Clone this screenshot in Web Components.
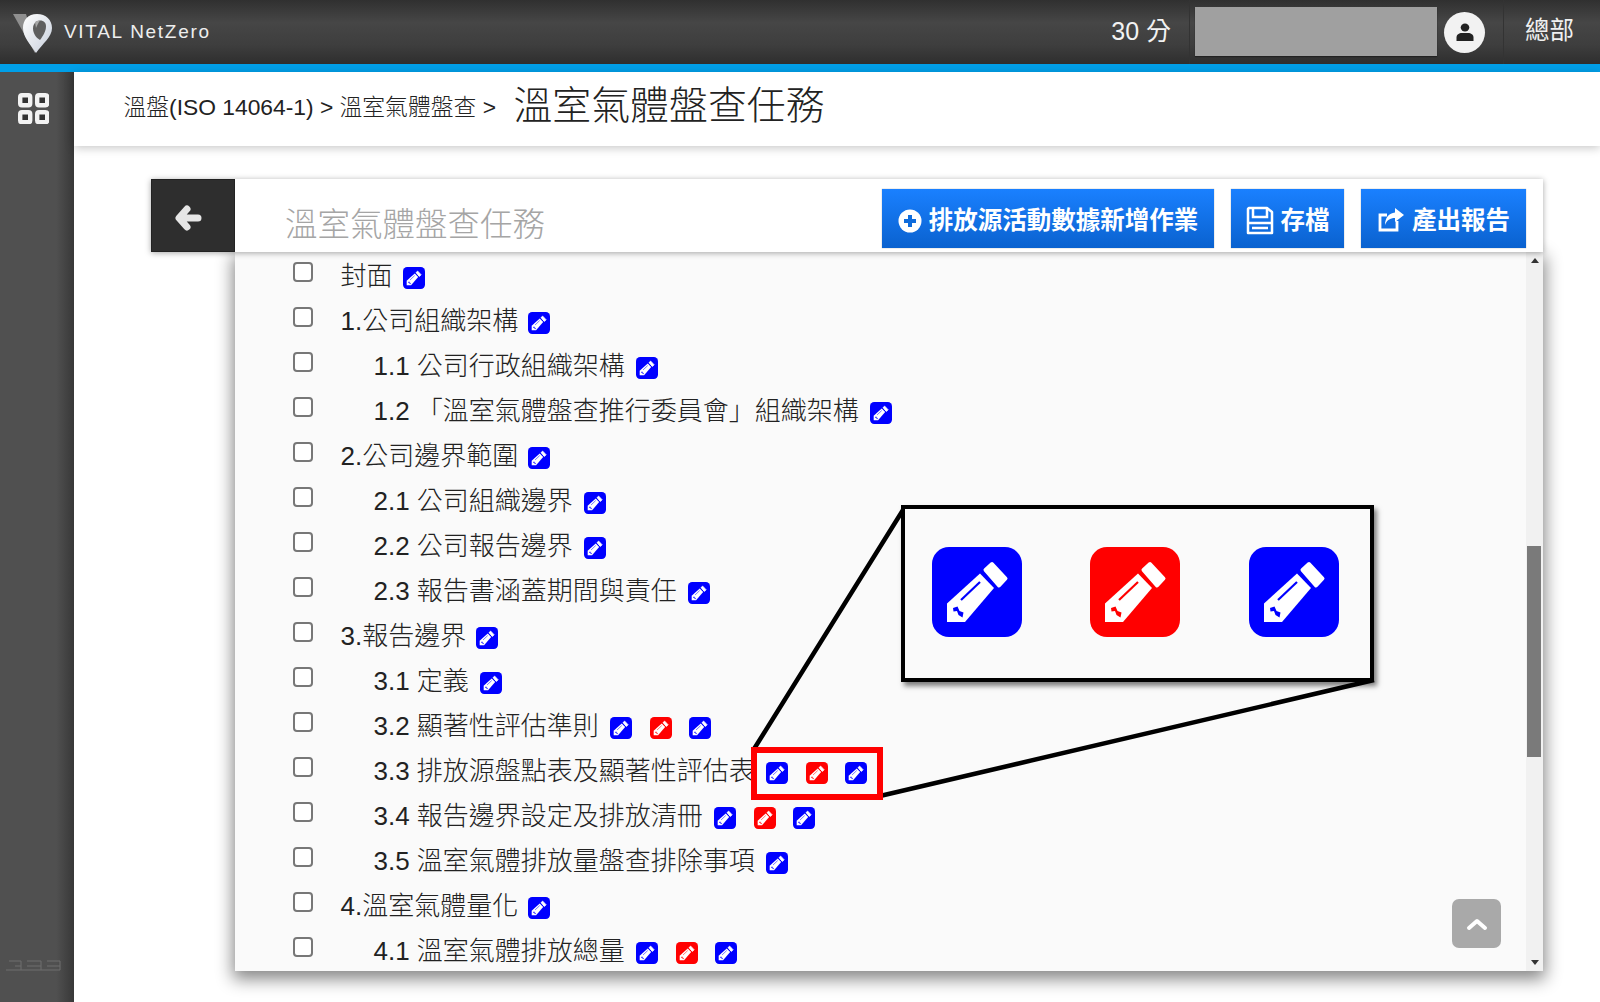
<!DOCTYPE html>
<html lang="zh-Hant"><head><meta charset="utf-8"><title>溫室氣體盤查任務</title>
<style>
html,body{margin:0;padding:0;height:100%;overflow:hidden;background:#fff}
body{font-family:"Liberation Sans","Noto Sans CJK TC",sans-serif}
</style></head><body>
<app-shell>
  <top-bar slot="top"></top-bar>
  <side-bar slot="side"></side-bar>
  <title-bar slot="title"></title-bar>
  <task-card slot="card">
    <task-row indent="0" marks="b">封面</task-row>
    <task-row indent="0" marks="b">1.公司組織架構</task-row>
    <task-row indent="1" marks="b">1.1 公司行政組織架構</task-row>
    <task-row indent="1" marks="b">1.2 「溫室氣體盤查推行委員會」組織架構</task-row>
    <task-row indent="0" marks="b">2.公司邊界範圍</task-row>
    <task-row indent="1" marks="b">2.1 公司組織邊界</task-row>
    <task-row indent="1" marks="b">2.2 公司報告邊界</task-row>
    <task-row indent="1" marks="b">2.3 報告書涵蓋期間與責任</task-row>
    <task-row indent="0" marks="b">3.報告邊界</task-row>
    <task-row indent="1" marks="b">3.1 定義</task-row>
    <task-row indent="1" marks="brb">3.2 顯著性評估準則</task-row>
    <task-row indent="1" marks="brb">3.3 排放源盤點表及顯著性評估表</task-row>
    <task-row indent="1" marks="brb">3.4 報告邊界設定及排放清冊</task-row>
    <task-row indent="1" marks="b">3.5 溫室氣體排放量盤查排除事項</task-row>
    <task-row indent="0" marks="b">4.溫室氣體量化</task-row>
    <task-row indent="1" marks="brb">4.1 溫室氣體排放總量</task-row>
  </task-card>
  <zoom-callout slot="over"></zoom-callout>
</app-shell>
<script>
const el=(html)=>{const t=document.createElement('template');t.innerHTML=html;return t;};
class Base extends HTMLElement{
  constructor(){super();this.attachShadow({mode:'open'});}
  render(html){this.shadowRoot.append(el(html).content.cloneNode(true));}
}
const PEN=`<rect width="90" height="90" rx="17" fill="var(--c)"/>
<path d="M15 75V56.500L48 26.500L62 41L33 75Z" fill="#fff"/>
<path d="M53.500 23L60 17L73.500 31.500L67 38.500Z" fill="#fff" stroke="#fff" stroke-width="4" stroke-linejoin="round"/>
<path d="M29 53L48 35" stroke="var(--c)" stroke-width="2.200" fill="none"/>
<path d="M21 61L25.500 59.500L27.500 64L31.500 65.500L30.500 70.500L26.500 68L25 64L21.500 64.500Z" fill="var(--c)"/>`;
customElements.define('pen-icon',class extends Base{
  connectedCallback(){const s=this.getAttribute('size')||22,c=this.getAttribute('tone')==='r'?'#ff0000':'#0000ff';
    this.render(`<style>:host{display:block;width:${s}px;height:${s}px;flex:none;--c:${c}}svg{display:block;width:100%;height:100%}</style><svg viewBox="0 0 90 90">${PEN}</svg>`);}
});
customElements.define('app-shell',class extends Base{
  connectedCallback(){this.render(`<style>
    :host{display:grid;position:relative;width:1600px;height:1002px;overflow:hidden;grid-template:72px 1fr/74px 1fr;background:#fff}
    .t{grid-column:1/3}.m{display:flex;flex-direction:column;min-width:0;min-height:0}
    .c{flex:1;display:flex;padding:33px 57px 31px 77px;min-height:0}
    </style><div class="t"><slot name="top"></slot></div><slot name="side"></slot>
    <div class="m"><slot name="title"></slot><div class="c"><slot name="card"></slot></div></div><slot name="over"></slot>`);}
});
customElements.define('top-bar',class extends Base{
  connectedCallback(){this.render(`<style>
    :host{display:flex;height:64px;border-bottom:8px solid #009fe8;align-items:stretch;color:#fff;background:linear-gradient(#303030,#464646 35%,#3e3e3e 70%,#2e2e2e)}
    .logo{display:flex;align-items:center;padding-left:13px;flex:1}
    svg.l{width:42px;height:42px;display:block;margin-right:9px}
    .name{font-family:"Liberation Sans",sans-serif;font-size:19px;letter-spacing:1.700px;color:#eee}
    .score{font-size:25px;display:flex;align-items:center;padding:0 18px 7px 0;color:#f2f2f2}
    .user{display:flex;align-items:center;border-left:1px solid #333;padding:0 18px 0 5px;gap:7px}
    .box{width:242px;height:49px;margin-top:-1px;background:#a0a0a0;box-shadow:0 1px 1px #222}
    .av{width:41px;height:41px;border-radius:50%;background:#f2f2f2;display:flex;align-items:center;justify-content:center}
    .org{display:flex;align-items:center;width:97px;box-sizing:border-box;padding:0 0 7px 21px;border-left:1px solid #333;font-size:24.500px;color:#f0f0f0}
    </style>
    <div class="logo"><svg class="l" viewBox="0 0 42 42">
      <defs><linearGradient id="g" x1="0" y1="0" x2="1" y2="1"><stop offset="0" stop-color="#fff"/><stop offset="1" stop-color="#c8cfdc"/></linearGradient></defs>
      <path d="M0 3H13L23 38L22 42Z" fill="#8f8f8f"/>
      <path d="M24 3C33 3 39 9 39 17C39 26 30 32 23 42C17 33 10 26 10 17C10 9 15 3 24 3Z" fill="url(#g)"/>
      <path d="M27 9.500C31 9.500 33 12 33 15.500C33 20 30 25 27 29C23 27 20 22 20 17.500C20 13 23 9.500 27 9.500Z" fill="#5f5f5f"/>
      <path d="M22 11C24 9.800 26 9.500 27 9.500C25 12 24 15 23 17Z" fill="#a8a8a8"/>
    </svg><span class="name">VITAL NetZero</span></div>
    <div class="score">30 分</div>
    <div class="user"><div class="box"></div><div class="av"><svg width="20" height="20" viewBox="0 0 20 20"><ellipse cx="10" cy="5.500" rx="4.300" ry="4" fill="#222"/><path d="M1.500 19V15.500C1.500 12.500 4 11 7 11H13C16 11 18.500 12.500 18.500 15.500V19Z" fill="#222"/></svg></div></div>
    <div class="org">總部</div>`);}
});
customElements.define('side-bar',class extends Base{
  connectedCallback(){this.render(`<style>
    :host{display:block;position:relative;background:linear-gradient(90deg,#505050 0,#505050 76%,#383838 100%)}
    svg{display:block;margin:21px 0 0 18px}
    .mark{position:absolute;left:5px;bottom:30px;width:56px;height:17px}
    </style>
    <svg width="31" height="31" viewBox="0 0 31 31">
      ${[[0,0],[17,0],[0,17],[17,17]].map(([x,y])=>`<rect x="${x+2.200}" y="${y+2.200}" width="10" height="10" rx="1.800" fill="#333" stroke="#f2f2f2" stroke-width="4.400"/>`).join('')}
    </svg>
    <svg class="mark" style="margin:0" viewBox="0 0 56 17"><g stroke="#6f6f6f" stroke-width="1" fill="none"><path d="M1 15H55M4 6H16M10 11H16M22 6H36M22 11H36M42 6H55M42 11H55M16 6V15M36 6V15M55 6V15"/></g></svg>`);}
});
customElements.define('title-bar',class extends Base{
  connectedCallback(){this.render(`<style>
    :host{display:flex;align-items:center;height:74px;box-sizing:border-box;padding:0 0 14px 49.500px;background:#fff;box-shadow:0 2px 9px rgba(0,0,0,.22);position:relative;color:#222;font-weight:300}
    .b{font-size:22.800px;margin:6px 17.500px 0 0;white-space:pre}
    h1{margin:0;font-size:38.900px;font-weight:300}
    </style><span class="b">溫盤(ISO 14064-1) &gt; 溫室氣體盤查 &gt;</span><h1>溫室氣體盤查任務</h1>`);}
});
customElements.define('task-card',class extends Base{
  connectedCallback(){this.render(`<style>
    :host{display:flex;flex-direction:column;flex:1;min-width:0;min-height:0;position:relative}
    .head{display:flex;height:73px;background:#fff;box-shadow:0 1px 6px rgba(0,0,0,.35);position:relative;z-index:1;flex:none;align-items:flex-start}
    .back{width:84px;height:73px;background:#2e2e2e;display:flex;align-items:center;justify-content:center;flex:none;box-sizing:border-box;border:1px solid #222;padding:4px 8px 0 0}
    h2{margin:0;flex:1;font-size:32.500px;font-weight:300;color:#a5a5a5;padding:24px 0 0 50px;line-height:44px;white-space:nowrap}
    .btns{display:flex;gap:17px;padding:10px 17px 0 0}
    .btn{height:59px;box-sizing:border-box;display:flex;align-items:center;justify-content:center;gap:7px;color:#fff;font-size:24.500px;font-weight:700;background:linear-gradient(#1a80ff,#0a62cf);box-shadow:0 0 1px #999}
    .body{flex:1;margin-left:84px;min-height:0;display:flex;background:#fafafa;box-shadow:0 6px 16px 2px rgba(0,0,0,.48);position:relative}
    .list{flex:1;padding-top:1px;overflow:hidden;min-width:0}
    .sb{width:17px;flex:none;background:#f1f1f1;display:flex;flex-direction:column;align-items:center;position:relative}
    .ar{display:block;width:0;height:0;border-left:4px solid transparent;border-right:4px solid transparent}
    .up{border-bottom:5px solid #333;margin-top:6px}
    .dn{border-top:5px solid #333;margin-top:auto;margin-bottom:6px}
    .th{position:absolute;top:294px;left:1px;width:14px;height:211px;background:#7a7a7a}
    .top{position:absolute;right:42px;bottom:23px;width:49px;height:49px;border-radius:7px;background:#a9a9a9;display:flex;align-items:center;justify-content:center}
    </style>
    <div class="head">
      <div class="back"><svg width="30" height="28" viewBox="0 0 30 28"><path d="M13 5L5 14L13 23M6 14H24" fill="none" stroke="#e6e6e6" stroke-width="7" stroke-linecap="round" stroke-linejoin="round"/></svg></div>
      <h2>溫室氣體盤查任務</h2>
      <div class="btns">
        <div class="btn" style="width:332px"><svg width="24" height="24" viewBox="0 0 24 24" style="margin-top:4px"><circle cx="12" cy="12" r="11.500" fill="#fff"/><path d="M12 6V18M6 12H18" stroke="#0d6bdc" stroke-width="4"/></svg>排放源活動數據新增作業</div>
        <div class="btn" style="width:113px"><svg width="28" height="29" viewBox="0 0 28 29" style="margin-top:4px"><path d="M3 2H21L26 6V27H2V3Z" fill="none" stroke="#fff" stroke-width="2.500" stroke-linejoin="round"/><path d="M7 2V11H21V2M2 17H26M6 22H22" fill="none" stroke="#fff" stroke-width="2.500"/></svg>存檔</div>
        <div class="btn" style="width:165px"><svg width="28" height="26" viewBox="0 0 28 26" style="margin-top:3px"><path d="M20 14V23H3V8H10" fill="none" stroke="#fff" stroke-width="2.800"/><path d="M18 1L27 8L18 15V11C13 11 10 13 8 18C8 11 12 6 18 5.500Z" fill="#fff"/></svg>產出報告</div>
      </div>
    </div>
    <div class="body">
      <div class="list"><slot></slot></div>
      <div class="sb"><i class="ar up"></i><div class="th"></div><i class="ar dn"></i></div>
      <div class="top"><svg width="22" height="14" viewBox="0 0 22 14"><path d="M3 11L11 4L19 11" fill="none" stroke="#fff" stroke-width="4" stroke-linecap="round" stroke-linejoin="round"/></svg></div>
    </div>`);}
});
customElements.define('task-row',class extends Base{
  connectedCallback(){const on=this.getAttribute('indent')==='1';
    const m=(this.getAttribute('marks')||'').split('').map(k=>`<pen-icon tone="${k}" size="22"></pen-icon>`).join('');
    this.render(`<style>
    :host{display:flex;align-items:center;height:45px;padding-left:58px;color:#222;font-size:26px;font-weight:300;white-space:nowrap}
    .cb{width:20px;height:20px;box-sizing:border-box;border:2px solid #777;border-radius:4px;background:#fff;margin:-7px 0 0 0;flex:none}
    .t{margin:0 0 4px ${on?60.500:27.500}px}
    .i{display:flex;gap:17.500px;margin:4px 0 0 ${on?11.500:10}px}
    </style><div class="cb"></div><span class="t"><slot></slot></span><div class="i">${m}</div>`);}
});
customElements.define('zoom-callout',class extends Base{
  connectedCallback(){this.render(`<style>
    :host{position:absolute;left:0;top:0;width:1600px;height:1002px;pointer-events:none;display:block}
    svg{position:absolute;left:0;top:0}
    .red{position:absolute;left:751px;top:747px;width:132px;height:53px;box-sizing:border-box;border:6px solid #f00}
    .box{position:absolute;left:901px;top:505px;width:473px;height:177px;box-sizing:border-box;border:4px solid #000;background:#fafafa;box-shadow:3px 4px 5px rgba(0,0,0,.5);display:flex;gap:68.300px;padding:38px 0 0 27px}
    </style>
    <svg width="1600" height="1002"><path d="M903 510L754 749M1374 680L880 796" stroke="#000" stroke-width="4.500" fill="none"/></svg>
    <div class="red"></div>
    <div class="box"><pen-icon size="90"></pen-icon><pen-icon tone="r" size="90"></pen-icon><pen-icon size="90"></pen-icon></div>`);}
});
</script>
</body></html>
